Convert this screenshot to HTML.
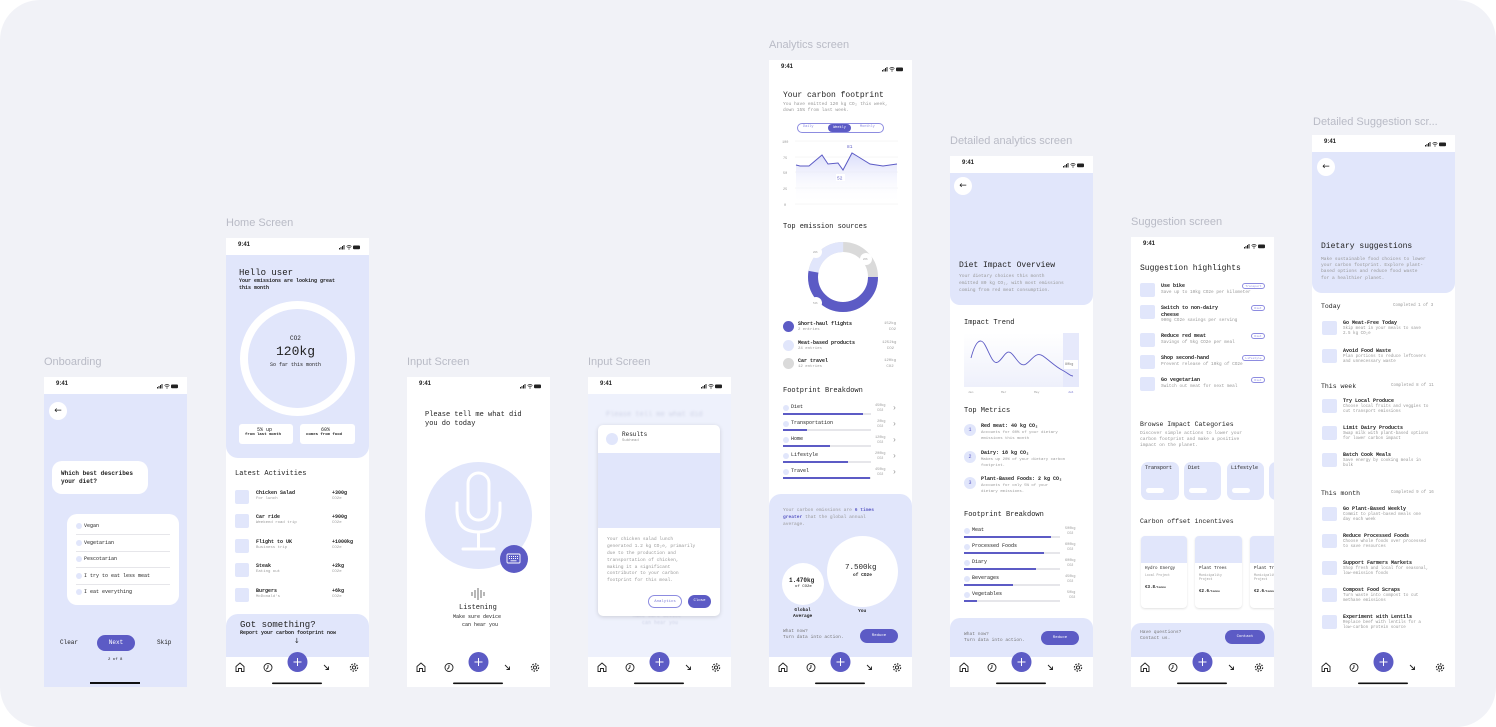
<!DOCTYPE html>
<html><head><meta charset="utf-8"><style>
*{margin:0;padding:0;box-sizing:border-box}
body{width:1496px;height:727px;background:#fff;position:relative;overflow:hidden;font-family:"Liberation Mono",monospace;color:#222}
#bg{position:absolute;left:0;top:0;width:1496px;height:727px;background:#f1f2f7;border-radius:40px}
.lbl{position:absolute;font-family:"Liberation Sans",sans-serif;font-size:11px;color:#b9bbc6;white-space:nowrap}
.ph{position:absolute;width:143px;background:#fff;overflow:hidden}
.t{position:absolute;white-space:nowrap;font-size:5px;line-height:1.4}
.g{color:#999}
.b{font-weight:bold}
.lav{position:absolute;background:#e1e6fb}
.sq{position:absolute;width:14px;height:14px;background:#e1e6fb;border-radius:2px}
.dot{position:absolute;width:6px;height:6px;border-radius:50%;background:#e1e6fb}
.pill{position:absolute;background:#5c5bc5;color:#fff;border-radius:10px;font-size:5px;text-align:center}
.sb{position:absolute;left:0;top:0;width:143px;height:17px;background:#fff}
.sb span{position:absolute;left:12px;top:4px;font-family:"Liberation Sans",sans-serif;font-size:6px;font-weight:bold}
.bar{position:absolute;height:2px;background:#e6e6ea}
.bar i{position:absolute;left:0;top:0;height:2px;background:#5c5bc5}
.back{position:absolute;width:18px;height:18px;border-radius:50%;background:#fff;font-size:9px;text-align:center;line-height:18px;font-family:"DejaVu Sans",sans-serif}
.tag{position:absolute;height:6px;border:0.7px solid #8d8ce0;border-radius:4px;font-size:3px;color:#8d8ce0;text-align:center;line-height:5px}
</style></head><body>
<div id="bg"></div>

<svg width="0" height="0" style="position:absolute">
<defs>
<g id="nav">
<rect y="5" width="143" height="30" fill="#fff"/>
<circle cx="71.5" cy="10" r="10" fill="#5c5bc5"/>
<path d="M67.5 10h8M71.5 6v8" stroke="#fff" stroke-width="1"/>
<path d="M10 19.5v-5l4-3.5 4 3.5v5h-2.5v-3h-3v3z" fill="none" stroke="#222" stroke-width=".9"/>
<circle cx="42" cy="15.5" r="4" fill="none" stroke="#222" stroke-width=".9"/>
<path d="M42 15.5v-2.5M42 15.5l-1.8 1.8" stroke="#222" stroke-width=".9"/>
<path d="M98 13l4.5 4.5M102.5 14.5v3h-3" fill="none" stroke="#222" stroke-width=".9"/>
<circle cx="128" cy="15.5" r="1.6" fill="none" stroke="#222" stroke-width=".9"/>
<circle cx="128" cy="15.5" r="3.6" fill="none" stroke="#222" stroke-width="1.2" stroke-dasharray="1.5 1.3"/>
<rect x="46" y="30.5" width="50" height="1.6" rx=".8" fill="#111"/>
</g>
<g id="st">
<rect x="0" y="3" width="1" height="1.5" fill="#222"/><rect x="1.5" y="2" width="1" height="2.5" fill="#222"/><rect x="3" y="1" width="1" height="3.5" fill="#222"/><rect x="4.5" y="0" width="1" height="4.5" fill="#222"/>
<path d="M7.5 1.5q2.5-2 5 0M8.5 2.7q1.5-1.2 3 0" fill="none" stroke="#222" stroke-width=".8"/><circle cx="10" cy="4" r=".6" fill="#222"/>
<rect x="14" y=".5" width="7" height="3.8" rx="1" fill="#222"/>
</g>
</defs>
</svg>

<!-- labels -->
<div class="lbl" style="left:44px;top:356px">Onboarding</div>
<div class="lbl" style="left:226px;top:217px">Home Screen</div>
<div class="lbl" style="left:407px;top:356px">Input Screen</div>
<div class="lbl" style="left:588px;top:356px">Input Screen</div>
<div class="lbl" style="left:769px;top:39px">Analytics screen</div>
<div class="lbl" style="left:950px;top:135px">Detailed analytics screen</div>
<div class="lbl" style="left:1131px;top:216px">Suggestion screen</div>
<div class="lbl" style="left:1313px;top:116px">Detailed Suggestion scr...</div>

<!-- Onboarding -->
<div class="ph" style="left:44px;top:377px;height:310px;background:#e1e6fb">
<div class="sb"><span>9:41</span><svg style="position:absolute;left:113px;top:7px" width="22" height="6"><use href="#st"/></svg></div>
<div class="back" style="left:5px;top:25px">←</div>
<div style="position:absolute;left:8px;top:84px;width:96px;height:33px;background:#fff;border-radius:10px"></div>
<div class="t b" style="left:17px;top:93px;font-size:6px">Which best describes<br>your diet?</div>
<div style="position:absolute;left:23px;top:137px;width:112px;height:91px;background:#fff;border-radius:10px"></div>
<div class="dot" style="left:32px;top:146px"></div><div class="t" style="left:40px;top:146px">Vegan</div>
<div class="bar" style="left:32px;top:157px;width:94px;height:.6px"></div>
<div class="dot" style="left:32px;top:163px"></div><div class="t" style="left:40px;top:163px">Vegetarian</div>
<div class="bar" style="left:32px;top:174px;width:94px;height:.6px"></div>
<div class="dot" style="left:32px;top:179px"></div><div class="t" style="left:40px;top:179px">Pescotarian</div>
<div class="bar" style="left:32px;top:190px;width:94px;height:.6px"></div>
<div class="dot" style="left:32px;top:196px"></div><div class="t" style="left:40px;top:196px">I try to eat less meat</div>
<div class="bar" style="left:32px;top:207px;width:94px;height:.6px"></div>
<div class="dot" style="left:32px;top:212px"></div><div class="t" style="left:40px;top:212px">I eat everything</div>
<div class="t" style="left:16px;top:262px;font-size:6px">Clear</div>
<div class="pill" style="left:53px;top:258px;width:38px;height:16px;line-height:16px;font-size:6px">Next</div>
<div class="t" style="left:113px;top:262px;font-size:6px">Skip</div>
<div class="t" style="left:64px;top:281px;font-size:4px">2 of 8</div>
<div style="position:absolute;left:46px;top:305px;width:50px;height:1.6px;background:#111"></div>
</div>

<!-- Home -->
<div class="ph" style="left:226px;top:238px;height:449px">
<div class="lav" style="left:0;top:17px;width:143px;height:203px;border-radius:0 0 12px 12px"></div>
<div class="sb"><span>9:41</span><svg style="position:absolute;left:113px;top:7px" width="22" height="6"><use href="#st"/></svg></div>
<div class="t" style="left:13px;top:29px;font-size:9px">Hello user</div>
<div class="t b" style="left:13px;top:40px">Your emissions are looking great<br>this month</div>
<div style="position:absolute;left:14px;top:63px;width:115px;height:115px;border-radius:50%;border:8px solid #fff;background:#e1e6fb"></div>
<div class="t" style="left:64px;top:97px;font-size:6px">CO2</div>
<div class="t" style="left:50px;top:105px;font-size:13px">120kg</div>
<div class="t" style="left:44px;top:124px;font-size:5px">So far this month</div>
<div style="position:absolute;left:13px;top:186px;width:54px;height:20px;background:#fff;border-radius:3px"></div>
<div style="position:absolute;left:74px;top:186px;width:55px;height:20px;background:#fff;border-radius:3px"></div>
<div class="t" style="left:31px;top:189px">5% up</div><div class="t b" style="left:19px;top:195px;font-size:4px">from last month</div>
<div class="t" style="left:95px;top:189px">60%</div><div class="t b" style="left:80px;top:195px;font-size:4px">comes from food</div>
<div class="t" style="left:9px;top:232px;font-size:7px">Latest Activities</div>
<div class="sq" style="left:9px;top:252px"></div><div class="t b" style="left:30px;top:252px">Chicken Salad</div><div class="t g" style="left:30px;top:259px;font-size:4px">For lunch</div><div class="t b" style="left:106px;top:252px">+300g</div><div class="t g" style="left:106px;top:259px;font-size:4px">CO2e</div>
<div class="sq" style="left:9px;top:276px"></div><div class="t b" style="left:30px;top:276px">Car ride</div><div class="t g" style="left:30px;top:283px;font-size:4px">Weekend road trip</div><div class="t b" style="left:106px;top:276px">+900g</div><div class="t g" style="left:106px;top:283px;font-size:4px">CO2e</div>
<div class="sq" style="left:9px;top:301px"></div><div class="t b" style="left:30px;top:301px">Flight to UK</div><div class="t g" style="left:30px;top:308px;font-size:4px">Business trip</div><div class="t b" style="left:106px;top:301px">+1000kg</div><div class="t g" style="left:106px;top:308px;font-size:4px">CO2e</div>
<div class="sq" style="left:9px;top:325px"></div><div class="t b" style="left:30px;top:325px">Steak</div><div class="t g" style="left:30px;top:332px;font-size:4px">Eating out</div><div class="t b" style="left:106px;top:325px">+2kg</div><div class="t g" style="left:106px;top:332px;font-size:4px">CO2e</div>
<div class="sq" style="left:9px;top:350px"></div><div class="t b" style="left:30px;top:350px">Burgers</div><div class="t g" style="left:30px;top:357px;font-size:4px">McDonald's</div><div class="t b" style="left:106px;top:350px">+6kg</div><div class="t g" style="left:106px;top:357px;font-size:4px">CO2e</div>
<div class="lav" style="left:0;top:376px;width:143px;height:50px;border-radius:12px 12px 0 0"></div>
<div class="t" style="left:14px;top:381px;font-size:9px">Got something?</div>
<div class="t b" style="left:14px;top:392px">Report your carbon footprint now</div>
<div class="t" style="left:68px;top:399px;font-size:7px;font-family:'DejaVu Sans'">↓</div>
<svg style="position:absolute;left:0;top:414px" width="143" height="35"><use href="#nav"/></svg>
</div>

<!-- Input 1 -->
<div class="ph" style="left:407px;top:377px;height:310px">
<div class="sb"><span>9:41</span><svg style="position:absolute;left:113px;top:7px" width="22" height="6"><use href="#st"/></svg></div>
<div class="t" style="left:18px;top:34px;font-size:7px;line-height:1.35">Please tell me what did<br>you do today</div>
<div style="position:absolute;left:18px;top:85px;width:107px;height:107px;border-radius:50%;background:#e1e6fb"></div>
<svg style="position:absolute;left:18px;top:85px" width="107" height="107">
<rect x="43" y="11" width="21" height="47" rx="10.5" fill="none" stroke="#fff" stroke-width="3"/>
<path d="M32 41v7q0 22 21.5 22t21.5-22v-7M53.5 70v16M38 87h31" fill="none" stroke="#fff" stroke-width="3" stroke-linecap="round"/>
</svg>
<div style="position:absolute;left:93px;top:168px;width:28px;height:28px;border-radius:50%;background:#5c5bc5"></div>
<svg style="position:absolute;left:99px;top:176px" width="16" height="12"><rect x="1" y="1" width="13" height="9" rx="1" fill="none" stroke="#fff" stroke-width=".9"/><path d="M3 3.5h1M5 3.5h1M7 3.5h1M9 3.5h1M11 3.5h1M3 5.5h1M5 5.5h1M7 5.5h1M9 5.5h1M11 5.5h1M4.5 7.8h6" stroke="#fff" stroke-width=".9"/></svg>
<svg style="position:absolute;left:64px;top:211px" width="14" height="12"><path d="M1 4v4M4 2v8M7 0v12M10 2v8M13 4v4" stroke="#333" stroke-width=".7"/></svg>
<div class="t" style="left:52px;top:227px;font-size:7px">Listening</div>
<div class="t" style="left:46px;top:237px;font-size:5px;text-align:center;line-height:1.5">Make sure device<br>&nbsp;&nbsp;can hear you</div>
<svg style="position:absolute;left:0;top:275px" width="143" height="35"><use href="#nav"/></svg>
</div>

<!-- Input 2 -->
<div class="ph" style="left:588px;top:377px;height:310px;background:#eef1fc">
<div class="sb"><span>9:41</span><svg style="position:absolute;left:113px;top:7px" width="22" height="6"><use href="#st"/></svg></div>
<div class="t" style="left:18px;top:34px;font-size:7px;color:#cfd3e6;filter:blur(1px)">Please tell me what did</div>
<div class="t" style="left:45px;top:236px;font-size:5px;color:#cfd3e6;text-align:center;filter:blur(.5px)">Make sure device<br>&nbsp;&nbsp;can hear you</div>
<div style="position:absolute;left:10px;top:48px;width:122px;height:191px;background:#fff;border-radius:5px;box-shadow:0 1px 4px rgba(0,0,0,.15);overflow:hidden">
<div style="position:absolute;left:8px;top:8px;width:12px;height:12px;border-radius:50%;background:#e1e6fb"></div>
<div class="t" style="left:24px;top:6px;font-size:6px">Results</div>
<div class="t g" style="left:24px;top:14px;font-size:4px">Subhead</div>
<div class="lav" style="left:0;top:28px;width:122px;height:75px"></div>
<div class="t g" style="left:9px;top:112px;font-size:4.6px;line-height:1.5">Your chicken salad lunch<br>generated 1.2 kg CO₂e, primarily<br>due to the production and<br>transportation of chicken,<br>making it a significant<br>contributor to your carbon<br>footprint for this meal.</div>
<div style="position:absolute;left:50px;top:170px;width:34px;height:13px;border:.8px solid #8d8ce0;border-radius:7px;font-size:4px;color:#7d7cd6;text-align:center;line-height:12px">Analytics</div>
<div class="pill" style="left:90px;top:170px;width:23px;height:13px;line-height:13px;font-size:4px">Close</div>
</div>
<svg style="position:absolute;left:0;top:275px" width="143" height="35"><use href="#nav"/></svg>
</div>

<!-- Analytics -->
<div class="ph" style="left:769px;top:60px;height:627px">
<div class="sb"><span>9:41</span><svg style="position:absolute;left:113px;top:7px" width="22" height="6"><use href="#st"/></svg></div>
<div class="t" style="left:14px;top:30px;font-size:8px">Your carbon footprint</div>
<div class="t g" style="left:14px;top:42px;font-size:4.6px">You have emitted 120 kg CO₂ this week,<br>down 15% from last week.</div>
<div style="position:absolute;left:28px;top:63px;width:87px;height:10px;border:.8px solid #8d8ce0;border-radius:5px"></div>
<div class="pill" style="left:59px;top:64px;width:23px;height:8px;line-height:8px;font-size:3.5px">Weekly</div>
<div class="t" style="left:34px;top:65px;font-size:3.5px;color:#8d8ce0">Daily</div>
<div class="t" style="left:91px;top:65px;font-size:3.5px;color:#8d8ce0">Monthly</div>
<svg style="position:absolute;left:0;top:75px" width="143" height="75">
<defs><linearGradient id="gf" x1="0" y1="0" x2="0" y2="1"><stop offset="0" stop-color="#d9dcfa"/><stop offset="1" stop-color="#fff" stop-opacity="0"/></linearGradient></defs>
<g stroke="#eee" stroke-width=".5"><path d="M26 6h103M26 22h103M26 37h103M26 53h103M26 69h103"/></g>
<g font-size="3.5" fill="#999" font-family="Liberation Mono"><text x="13" y="8">100</text><text x="14" y="24">75</text><text x="14" y="39">50</text><text x="14" y="55">25</text><text x="15" y="71">0</text></g>
<path d="M27 30L31 31L40 31L53 20L59 29L69 28L74 35L83 18L88 21L101 29L114 31L128 29L128 69L27 69Z" fill="url(#gf)"/>
<path d="M27 30L31 31L40 31L53 20L59 29L69 28L74 35L83 18L88 21L101 29L114 31L128 29" fill="none" stroke="#5c5bc5" stroke-width="1"/>
<text x="78" y="13" font-size="4.5" fill="#5c5bc5" font-family="Liberation Mono">81</text>
<rect x="67" y="39" width="9" height="7" fill="#fff"/><text x="68" y="44.5" font-size="4.5" fill="#5c5bc5" font-family="Liberation Mono">52</text>
</svg>
<div class="t" style="left:14px;top:163px;font-size:7px">Top emission sources</div>
<svg style="position:absolute;left:34px;top:177px" width="80" height="80">
<circle cx="40" cy="40" r="30" fill="none" stroke="#dadada" stroke-width="10"/>
<circle cx="40" cy="40" r="30" fill="none" stroke="#5c5bc5" stroke-width="10" stroke-dasharray="100 89" transform="rotate(0 40 40)"/>
<circle cx="40" cy="40" r="30" fill="none" stroke="#e1e6fb" stroke-width="10" stroke-dasharray="42 147" transform="rotate(190 40 40)"/>
<circle cx="13" cy="15" r="6" fill="#fff"/><circle cx="63" cy="22" r="6" fill="#fff"/><circle cx="13" cy="66" r="6" fill="#fff"/>
<g font-size="2.5" fill="#999" font-family="Liberation Mono"><text x="10" y="16">20%</text><text x="60" y="23">26%</text><text x="10" y="67">54%</text></g>
</svg>
<div style="position:absolute;left:14px;top:261px;width:11px;height:11px;border-radius:50%;background:#5c5bc5"></div>
<div class="t b" style="left:29px;top:261px">Short-haul flights</div><div class="t g" style="left:29px;top:268px;font-size:4px">2 entries</div><div class="t g" style="left:115px;top:262px;font-size:4px;text-align:right">152kg<br>&nbsp;CO2</div>
<div style="position:absolute;left:14px;top:280px;width:11px;height:11px;border-radius:50%;background:#e1e6fb"></div>
<div class="t b" style="left:29px;top:280px">Meat-based products</div><div class="t g" style="left:29px;top:287px;font-size:4px">24 entries</div><div class="t g" style="left:113px;top:281px;font-size:4px">1252kg<br>&nbsp;&nbsp;CO2</div>
<div style="position:absolute;left:14px;top:298px;width:11px;height:11px;border-radius:50%;background:#dadada"></div>
<div class="t b" style="left:29px;top:298px">Car travel</div><div class="t g" style="left:29px;top:305px;font-size:4px">12 entries</div><div class="t g" style="left:115px;top:299px;font-size:4px">120kg<br>&nbsp;CO2</div>
<div class="t" style="left:14px;top:327px;font-size:7px">Footprint Breakdown</div>
<div class="dot" style="left:14px;top:345px"></div><div class="t" style="left:22px;top:344px">Diet</div><div class="bar" style="left:14px;top:353px;width:88px"><i style="width:80px"></i></div><div class="t g" style="left:106px;top:344px;font-size:3.5px">450kg<br>&nbsp;CO2</div><div class="t g" style="left:123px;top:343px;font-size:8px">›</div>
<div class="dot" style="left:14px;top:361px"></div><div class="t" style="left:22px;top:360px">Transportation</div><div class="bar" style="left:14px;top:369px;width:88px"><i style="width:24px"></i></div><div class="t g" style="left:106px;top:360px;font-size:3.5px">&nbsp;20kg<br>&nbsp;CO2</div><div class="t g" style="left:123px;top:359px;font-size:8px">›</div>
<div class="dot" style="left:14px;top:377px"></div><div class="t" style="left:22px;top:376px">Home</div><div class="bar" style="left:14px;top:385px;width:88px"><i style="width:47px"></i></div><div class="t g" style="left:106px;top:376px;font-size:3.5px">120kg<br>&nbsp;CO2</div><div class="t g" style="left:123px;top:375px;font-size:8px">›</div>
<div class="dot" style="left:14px;top:393px"></div><div class="t" style="left:22px;top:392px">Lifestyle</div><div class="bar" style="left:14px;top:401px;width:88px"><i style="width:65px"></i></div><div class="t g" style="left:106px;top:392px;font-size:3.5px">200kg<br>&nbsp;CO2</div><div class="t g" style="left:123px;top:391px;font-size:8px">›</div>
<div class="dot" style="left:14px;top:409px"></div><div class="t" style="left:22px;top:408px">Travel</div><div class="bar" style="left:14px;top:417px;width:88px"><i style="width:87px"></i></div><div class="t g" style="left:106px;top:408px;font-size:3.5px">450kg<br>&nbsp;CO2</div><div class="t g" style="left:123px;top:407px;font-size:8px">›</div>
<div class="lav" style="left:0;top:434px;width:143px;height:170px;border-radius:12px 12px 0 0"></div>
<div class="t g" style="left:14px;top:448px;font-size:4.6px;line-height:1.5">Your carbon emissions are <b style="color:#5c5bc5">6 times<br>greater</b> that the global annual<br>average.</div>
<div style="position:absolute;left:13px;top:503px;width:42px;height:42px;border-radius:50%;background:#fff"></div>
<div class="t b" style="left:20px;top:517px;font-size:6px">1.470kg</div><div class="t" style="left:26px;top:525px;font-size:4px">of CO2e</div>
<div style="position:absolute;left:58px;top:476px;width:71px;height:71px;border-radius:50%;background:#fff"></div>
<div class="t" style="left:76px;top:503px;font-size:7.5px">7.500kg</div><div class="t b" style="left:84px;top:513px;font-size:4.5px">of CO2e</div>
<div class="t b" style="left:24px;top:548px;font-size:4.6px;text-align:center">Global<br>Average</div>
<div class="t b" style="left:89px;top:549px;font-size:4.6px">You</div>
<div class="t g" style="left:14px;top:569px;font-size:4.6px;color:#777">What now?<br>Turn data into action.</div>
<div class="pill" style="left:91px;top:569px;width:38px;height:14px;line-height:14px;font-size:4px">Reduce</div>
<svg style="position:absolute;left:0;top:592px" width="143" height="35"><use href="#nav"/></svg>
</div>

<!-- Detailed analytics -->
<div class="ph" style="left:950px;top:156px;height:531px">
<div class="lav" style="left:0;top:17px;width:143px;height:132px;border-radius:0 0 10px 10px"></div>
<div class="sb"><span>9:41</span><svg style="position:absolute;left:113px;top:7px" width="22" height="6"><use href="#st"/></svg></div>
<div class="back" style="left:4px;top:21px">←</div>
<div class="t" style="left:9px;top:104px;font-size:8px">Diet Impact Overview</div>
<div class="t g" style="left:9px;top:118px;font-size:4.6px;line-height:1.5">Your dietary choices this month<br>emitted 80 kg CO₂, with most emissions<br>coming from red meat consumption.</div>
<div class="t" style="left:14px;top:163px;font-size:7px">Impact Trend</div>
<svg style="position:absolute;left:0;top:175px" width="143" height="65">
<defs><linearGradient id="gt" x1="0" y1="0" x2="0" y2="1"><stop offset="0" stop-color="#fff"/><stop offset="1" stop-color="#eef0fb"/></linearGradient></defs>
<rect x="14" y="2" width="115" height="54" fill="url(#gt)"/>
<rect x="113" y="2" width="16" height="54" fill="#e6e9fb"/>
<path d="M21 27C25 12 30 5 35 14S43 34 48 31S56 18 61 22S70 37 76 33S86 20 93 25S106 36 112 39S120 45 123 45" fill="none" stroke="#5c5bc5" stroke-width=".9"/>
<rect x="114" y="29" width="14" height="9" fill="#fff"/>
<text x="115" y="34" font-size="3.5" fill="#777" font-family="Liberation Mono">80kg</text>
<g font-size="3" fill="#999" font-family="Liberation Mono"><text x="18" y="62">Jan</text><text x="51" y="62">Mar</text><text x="84" y="62">May</text><text x="118" y="62" fill="#5c5bc5">Jul</text></g>
</svg>
<div class="t" style="left:14px;top:251px;font-size:7px">Top Metrics</div>
<div style="position:absolute;left:14px;top:268px;width:12px;height:12px;border-radius:50%;background:#e1e6fb;color:#5c5bc5;font-size:5px;text-align:center;line-height:12px">1</div>
<div class="t b" style="left:31px;top:267px">Red meat: 40 kg CO₂</div><div class="t g" style="left:31px;top:275px;font-size:4px">Accounts for 60% of your dietary<br>emissions this month</div>
<div style="position:absolute;left:14px;top:295px;width:12px;height:12px;border-radius:50%;background:#e1e6fb;color:#5c5bc5;font-size:5px;text-align:center;line-height:12px">2</div>
<div class="t b" style="left:31px;top:294px">Dairy: 18 kg CO₂</div><div class="t g" style="left:31px;top:302px;font-size:4px">Makes up 20% of your dietary carbon<br>footprint.</div>
<div style="position:absolute;left:14px;top:321px;width:12px;height:12px;border-radius:50%;background:#e1e6fb;color:#5c5bc5;font-size:5px;text-align:center;line-height:12px">3</div>
<div class="t b" style="left:31px;top:320px">Plant-Based Foods: 2 kg CO₂</div><div class="t g" style="left:31px;top:328px;font-size:4px">Accounts for only 5% of your<br>dietary emissions.</div>
<div class="t" style="left:14px;top:355px;font-size:7px">Footprint Breakdown</div>
<div class="dot" style="left:14px;top:372px"></div><div class="t" style="left:22px;top:371px">Meat</div><div class="bar" style="left:14px;top:380px;width:96px"><i style="width:87px"></i></div><div class="t g" style="left:115px;top:371px;font-size:3.5px">500kg<br>&nbsp;CO2</div>
<div class="dot" style="left:14px;top:388px"></div><div class="t" style="left:22px;top:387px">Processed Foods</div><div class="bar" style="left:14px;top:396px;width:96px"><i style="width:80px"></i></div><div class="t g" style="left:115px;top:387px;font-size:3.5px">600kg<br>&nbsp;CO2</div>
<div class="dot" style="left:14px;top:404px"></div><div class="t" style="left:22px;top:403px">Diary</div><div class="bar" style="left:14px;top:412px;width:96px"><i style="width:72px"></i></div><div class="t g" style="left:115px;top:403px;font-size:3.5px">600kg<br>&nbsp;CO2</div>
<div class="dot" style="left:14px;top:420px"></div><div class="t" style="left:22px;top:419px">Beverages</div><div class="bar" style="left:14px;top:428px;width:96px"><i style="width:49px"></i></div><div class="t g" style="left:115px;top:419px;font-size:3.5px">450kg<br>&nbsp;CO2</div>
<div class="dot" style="left:14px;top:436px"></div><div class="t" style="left:22px;top:435px">Vegetables</div><div class="bar" style="left:14px;top:444px;width:96px"><i style="width:13px"></i></div><div class="t g" style="left:117px;top:435px;font-size:3.5px">50kg<br>&nbsp;CO2</div>
<div class="lav" style="left:0;top:462px;width:143px;height:45px;border-radius:10px 10px 0 0"></div>
<div class="t g" style="left:14px;top:476px;font-size:4.6px;color:#777">What now?<br>Turn data into action.</div>
<div class="pill" style="left:91px;top:475px;width:38px;height:14px;line-height:14px;font-size:4px">Reduce</div>
<svg style="position:absolute;left:0;top:496px" width="143" height="35"><use href="#nav"/></svg>
</div>

<!-- Suggestion -->
<div class="ph" style="left:1131px;top:237px;height:450px">
<div class="sb"><span>9:41</span><svg style="position:absolute;left:113px;top:7px" width="22" height="6"><use href="#st"/></svg></div>
<div class="t" style="left:9px;top:26px;font-size:8px">Suggestion highlights</div>
<div class="sq" style="left:9px;top:46px;width:15px;height:14px"></div><div class="t b" style="left:30px;top:46px">Use bike</div><div class="t g" style="left:30px;top:53px;font-size:4.4px">Save up to 10kg CO2e per kilometer</div><div class="tag" style="left:111px;top:46px;width:23px">Transport</div>
<div class="sq" style="left:9px;top:68px;width:15px"></div><div class="t b" style="left:30px;top:68px;line-height:1.3">Switch to non-dairy<br>cheese</div><div class="t g" style="left:30px;top:81px;font-size:4.4px">900g CO2e savings per serving</div><div class="tag" style="left:120px;top:68px;width:14px">Diet</div>
<div class="sq" style="left:9px;top:96px;width:15px"></div><div class="t b" style="left:30px;top:96px">Reduce red meat</div><div class="t g" style="left:30px;top:103px;font-size:4.4px">Savings of 5kg CO2e per meal</div><div class="tag" style="left:120px;top:96px;width:14px">Diet</div>
<div class="sq" style="left:9px;top:118px;width:15px"></div><div class="t b" style="left:30px;top:118px">Shop second-hand</div><div class="t g" style="left:30px;top:125px;font-size:4.4px">Prevent release of 10kg of CO2e</div><div class="tag" style="left:111px;top:118px;width:23px">Lifestyle</div>
<div class="sq" style="left:9px;top:140px;width:15px"></div><div class="t b" style="left:30px;top:140px">Go vegetarian</div><div class="t g" style="left:30px;top:147px;font-size:4.4px">Switch out meat for next meal</div><div class="tag" style="left:120px;top:140px;width:14px">Diet</div>
<div class="t" style="left:9px;top:183px;font-size:6.5px">Browse Impact Categories</div>
<div class="t g" style="left:9px;top:194px;font-size:4.6px;line-height:1.3">Discover simple actions to lower your<br>carbon footprint and make a positive<br>impact on the planet.</div>
<div class="lav" style="left:10px;top:225px;width:38px;height:38px;border-radius:7px"></div><div class="t" style="left:14px;top:228px">Transport</div><div style="position:absolute;left:15px;top:251px;width:18px;height:5px;background:#fff;border-radius:3px"></div>
<div class="lav" style="left:53px;top:225px;width:37px;height:38px;border-radius:7px"></div><div class="t" style="left:57px;top:228px">Diet</div><div style="position:absolute;left:58px;top:251px;width:18px;height:5px;background:#fff;border-radius:3px"></div>
<div class="lav" style="left:96px;top:225px;width:37px;height:38px;border-radius:7px"></div><div class="t" style="left:100px;top:228px">Lifestyle</div><div style="position:absolute;left:101px;top:251px;width:18px;height:5px;background:#fff;border-radius:3px"></div>
<div class="lav" style="left:138px;top:225px;width:20px;height:38px;border-radius:7px"></div>
<div class="t" style="left:9px;top:280px;font-size:6.5px">Carbon offset incentives</div>
<div style="position:absolute;left:10px;top:299px;width:46px;height:72px;background:#fff;border-radius:4px;box-shadow:0 1px 2px rgba(0,0,0,.12);overflow:hidden"><div class="lav" style="left:0;top:0;width:46px;height:27px"></div><div class="t" style="left:4px;top:31px;font-size:4.2px">Hydro Energy</div><div class="t g" style="left:4px;top:37px;font-size:3.2px">Local Project</div><div class="t b" style="left:4px;top:50px;font-size:4.2px">€3.8<span style="font-size:3px">/tonne</span></div></div>
<div style="position:absolute;left:64px;top:299px;width:47px;height:72px;background:#fff;border-radius:4px;box-shadow:0 1px 2px rgba(0,0,0,.12);overflow:hidden"><div class="lav" style="left:0;top:0;width:47px;height:27px"></div><div class="t" style="left:4px;top:31px;font-size:4.2px">Plant Trees</div><div class="t g" style="left:4px;top:37px;font-size:3.2px">Municipality<br>Project</div><div class="t b" style="left:4px;top:54px;font-size:4.2px">€2.6<span style="font-size:3px">/tonne</span></div></div>
<div style="position:absolute;left:119px;top:299px;width:47px;height:72px;background:#fff;border-radius:4px;box-shadow:0 1px 2px rgba(0,0,0,.12);overflow:hidden"><div class="lav" style="left:0;top:0;width:47px;height:27px"></div><div class="t" style="left:4px;top:31px;font-size:4.2px">Plant Trees</div><div class="t g" style="left:4px;top:37px;font-size:3.2px">Municipality<br>Project</div><div class="t b" style="left:4px;top:54px;font-size:4.2px">€2.6<span style="font-size:3px">/tonne</span></div></div>
<div class="lav" style="left:0;top:386px;width:143px;height:40px;border-radius:10px 10px 0 0"></div>
<div class="t g" style="left:9px;top:393px;font-size:4.6px;color:#777">Have questions?<br>Contact us.</div>
<div class="pill" style="left:94px;top:393px;width:40px;height:14px;line-height:14px;font-size:4px">Contact</div>
<svg style="position:absolute;left:0;top:415px" width="143" height="35"><use href="#nav"/></svg>
</div>

<!-- Detailed suggestion -->
<div class="ph" style="left:1312px;top:135px;height:552px">
<div class="lav" style="left:0;top:17px;width:143px;height:141px;border-radius:0 0 10px 10px"></div>
<div class="sb"><span>9:41</span><svg style="position:absolute;left:113px;top:7px" width="22" height="6"><use href="#st"/></svg></div>
<div class="back" style="left:5px;top:23px">←</div>
<div class="t" style="left:9px;top:106px;font-size:8px">Dietary suggestions</div>
<div class="t g" style="left:9px;top:122px;font-size:4.6px;line-height:1.35">Make sustainable food choices to lower<br>your carbon footprint. Explore plant-<br>based options and reduce food waste<br>for a healthier planet.</div>
<div class="t" style="left:9px;top:167px;font-size:6.5px">Today</div><div class="t g" style="left:81px;top:169px;font-size:4.2px">Completed 1 of 3</div>
<div class="sq" style="left:10px;top:186px;width:15px"></div><div class="t b" style="left:31px;top:185px">Go Meat-Free Today</div><div class="t g" style="left:31px;top:192px;font-size:4.2px;line-height:1.3">Skip meat in your meals to save<br>2.5 kg CO₂e</div>
<div class="sq" style="left:10px;top:214px;width:15px"></div><div class="t b" style="left:31px;top:213px">Avoid Food Waste</div><div class="t g" style="left:31px;top:220px;font-size:4.2px;line-height:1.3">Plan portions to reduce leftovers<br>and unnecessary waste</div>
<div class="t" style="left:9px;top:247px;font-size:6.5px">This week</div><div class="t g" style="left:79px;top:249px;font-size:4.2px">Completed 8 of 11</div>
<div class="sq" style="left:10px;top:264px;width:15px"></div><div class="t b" style="left:31px;top:263px">Try Local Produce</div><div class="t g" style="left:31px;top:270px;font-size:4.2px;line-height:1.3">Choose local fruits and veggies to<br>cut transport emissions</div>
<div class="sq" style="left:10px;top:291px;width:15px"></div><div class="t b" style="left:31px;top:290px">Limit Dairy Products</div><div class="t g" style="left:31px;top:297px;font-size:4.2px;line-height:1.3">Swap milk with plant-based options<br>for lower carbon impact</div>
<div class="sq" style="left:10px;top:318px;width:15px"></div><div class="t b" style="left:31px;top:317px">Batch Cook Meals</div><div class="t g" style="left:31px;top:324px;font-size:4.2px;line-height:1.3">Save energy by cooking meals in<br>bulk</div>
<div class="t" style="left:9px;top:354px;font-size:6.5px">This month</div><div class="t g" style="left:79px;top:356px;font-size:4.2px">Completed 9 of 16</div>
<div class="sq" style="left:10px;top:372px;width:15px"></div><div class="t b" style="left:31px;top:371px">Go Plant-Based Weekly</div><div class="t g" style="left:31px;top:378px;font-size:4.2px;line-height:1.3">Commit to plant-based meals one<br>day each week</div>
<div class="sq" style="left:10px;top:399px;width:15px"></div><div class="t b" style="left:31px;top:398px">Reduce Processed Foods</div><div class="t g" style="left:31px;top:405px;font-size:4.2px;line-height:1.3">Choose whole foods over processed<br>to save resources</div>
<div class="sq" style="left:10px;top:426px;width:15px"></div><div class="t b" style="left:31px;top:425px">Support Farmers Markets</div><div class="t g" style="left:31px;top:432px;font-size:4.2px;line-height:1.3">Shop fresh and local for seasonal,<br>low-emission foods</div>
<div class="sq" style="left:10px;top:453px;width:15px"></div><div class="t b" style="left:31px;top:452px">Compost Food Scraps</div><div class="t g" style="left:31px;top:459px;font-size:4.2px;line-height:1.3">Turn waste into compost to cut<br>methane emissions</div>
<div class="sq" style="left:10px;top:480px;width:15px"></div><div class="t b" style="left:31px;top:479px">Experiment with Lentils</div><div class="t g" style="left:31px;top:486px;font-size:4.2px;line-height:1.3">Replace beef with lentils for a<br>low-carbon protein source</div>
<svg style="position:absolute;left:0;top:517px" width="143" height="35"><use href="#nav"/></svg>
</div>
</body></html>
